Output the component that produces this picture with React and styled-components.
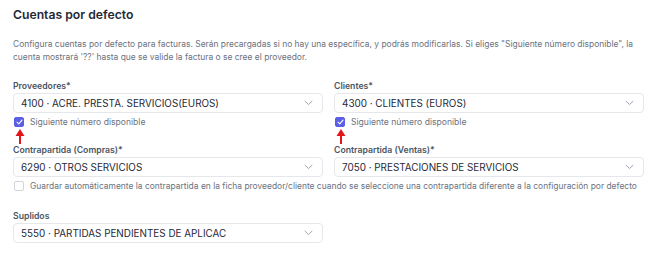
import React from "react";
import styled, { createGlobalStyle } from "styled-components";

const Global = createGlobalStyle`
  html, body { margin: 0; padding: 0; background: #ffffff; }
  body { font-family: Inter, "Noto Sans", Arial, sans-serif; -webkit-font-smoothing: antialiased; }
  * { box-sizing: border-box; }
`;

const Page = styled.div`
  width: 670px;
  height: 273px;
  padding: 6px 13px 0 13px;
  background: #fff;
`;

const Title = styled.h2`
  margin: 0;
  font-size: 12.2px;
  line-height: 18px;
  font-weight: 600;
  color: #1f2937;
`;

const Desc = styled.p`
  margin: 14px 0 0 0;
  font-size: 8.45px;
  line-height: 13px;
  color: #6b7280;
`;

const Grid = styled.div`
  display: grid;
  grid-template-columns: 310px 310px;
  column-gap: 11px;
  margin-top: 16px;
`;

const Field = styled.div`
  display: flex;
  flex-direction: column;
  grid-column: ${(p) => (p.$full ? "1 / -1" : "auto")};
  margin-top: ${(p) => p.$mt || 0}px;
`;

const Label = styled.label`
  font-size: 8.7px;
  line-height: 12px;
  font-weight: 600;
  color: #4b5563;
  margin-bottom: 1px;
`;

const Select = styled.div`
  display: flex;
  align-items: center;
  justify-content: space-between;
  width: ${(p) => p.$w || 310}px;
  height: 20px;
  padding: 0 9px 0 7px;
  border: 1px solid #e5e7eb;
  border-radius: 4px;
  background: #fff;
  font-size: 9.9px;
  color: #1f2937;
`;

const Chevron = () => (
  <svg width="9" height="6" viewBox="0 0 9 6" fill="none">
    <path d="M1 1.2 L4.5 4.6 L8 1.2" stroke="#9ca3af" strokeWidth="1" strokeLinecap="round" strokeLinejoin="round" />
  </svg>
);

const CheckRow = styled.div`
  display: flex;
  align-items: center;
  gap: 6px;
  margin-top: 4px;
  margin-left: 1px;
  height: 10px;
  font-size: ${(p) => p.$fs || 8.6}px;
  color: #6b7280;
  white-space: nowrap;
`;

const Box = styled.span`
  position: relative;
  flex: none;
  width: 10px;
  height: 10px;
  border-radius: 2px;
  background: ${(p) => (p.$checked ? "#5a5fe6" : "#fff")};
  border: 1px solid ${(p) => (p.$checked ? "#5a5fe6" : "#d1d5db")};
  display: flex;
  align-items: center;
  justify-content: center;
`;

const Arrow = styled.svg`
  position: absolute;
  left: 0;
  top: 11px;
`;

const Spacer = styled.div`
  height: 17px;
`;

const Check = () => (
  <svg width="7" height="6" viewBox="0 0 7 6" fill="none">
    <path d="M1 3.2 L2.8 4.8 L6 1.2" stroke="#fff" strokeWidth="1.1" strokeLinecap="round" strokeLinejoin="round" />
  </svg>
);

const RedArrow = () => (
  <Arrow width="10" height="15" viewBox="0 0 10 15">
    <polygon points="5,0 9.5,7 6,7 6,15 4,15 4,7 0.5,7" fill="#e3151a" />
  </Arrow>
);

function Checkbox({ checked, children, arrow, fs }) {
  return (
    <CheckRow $fs={fs}>
      <Box $checked={checked}>
        {checked && <Check />}
        {arrow && <RedArrow />}
      </Box>
      {children}
    </CheckRow>
  );
}

export default function App() {
  return (
    <>
      <Global />
      <Page>
        <Title>Cuentas por defecto</Title>
        <Desc>
          Configura cuentas por defecto para facturas. Serán precargadas si no hay una específica, y podrás modificarlas. Si eliges "Siguiente número disponible", la cuenta mostrará '??' hasta que se valide la factura o se cree el proveedor.
        </Desc>
        <Grid>
          <Field>
            <Label>Proveedores*</Label>
            <Select>
              <span>4100 · ACRE. PRESTA. SERVICIOS(EUROS)</span>
              <Chevron />
            </Select>
            <Checkbox checked arrow>Siguiente número disponible</Checkbox>
            <Spacer />
          </Field>
          <Field>
            <Label>Clientes*</Label>
            <Select>
              <span>4300 · CLIENTES (EUROS)</span>
              <Chevron />
            </Select>
            <Checkbox checked arrow>Siguiente número disponible</Checkbox>
            <Spacer />
          </Field>
          <Field>
            <Label>Contrapartida (Compras)*</Label>
            <Select>
              <span>6290 · OTROS SERVICIOS</span>
              <Chevron />
            </Select>
          </Field>
          <Field>
            <Label>Contrapartida (Ventas)*</Label>
            <Select>
              <span>7050 · PRESTACIONES DE SERVICIOS</span>
              <Chevron />
            </Select>
          </Field>
          <Field $full>
            <Checkbox fs={8.45}>
              Guardar automáticamente la contrapartida en la ficha proveedor/cliente cuando se seleccione una contrapartida diferente a la configuración por defecto
            </Checkbox>
          </Field>
          <Field $full $mt={19}>
            <Label>Suplidos</Label>
            <Select>
              <span>5550 · PARTIDAS PENDIENTES DE APLICAC</span>
              <Chevron />
            </Select>
          </Field>
        </Grid>
      </Page>
    </>
  );
}
